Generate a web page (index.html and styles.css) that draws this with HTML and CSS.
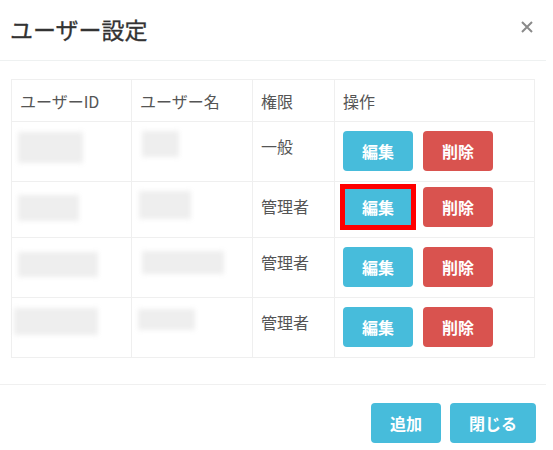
FILE: index.html
```html
<!DOCTYPE html>
<html lang="ja">
<head>
<meta charset="utf-8">
<title>ユーザー設定</title>
<link rel="stylesheet" href="styles.css">
</head>
<body>
<div class="modal">
  <div class="modal-header">
    <h4 class="modal-title">ユーザー設定</h4>
    <button class="close" type="button" aria-label="閉じる">
      <svg width="12" height="12" viewBox="0 0 12 12"><path d="M1 1L11 11M11 1L1 11" stroke="#8a8a8a" stroke-width="2" fill="none"/></svg>
    </button>
  </div>
  <div class="modal-body">
    <table class="users">
      <colgroup>
        <col class="c1"><col class="c2"><col class="c3"><col class="c4">
      </colgroup>
      <thead>
        <tr><th>ユーザーID</th><th>ユーザー名</th><th>権限</th><th>操作</th></tr>
      </thead>
      <tbody>
        <tr>
          <td><span class="redact r1a"></span></td>
          <td><span class="redact r1b"></span></td>
          <td>一般</td>
          <td class="ops"><div class="ops-inner"><button class="btn btn-info">編集</button><button class="btn btn-danger">削除</button></div></td>
        </tr>
        <tr class="row2">
          <td><span class="redact r2a"></span></td>
          <td><span class="redact r2b"></span></td>
          <td>管理者</td>
          <td class="ops"><div class="ops-inner"><button class="btn btn-info marked">編集</button><button class="btn btn-danger">削除</button></div></td>
        </tr>
        <tr>
          <td><span class="redact r3a"></span></td>
          <td><span class="redact r3b"></span></td>
          <td>管理者</td>
          <td class="ops"><div class="ops-inner"><button class="btn btn-info">編集</button><button class="btn btn-danger">削除</button></div></td>
        </tr>
        <tr>
          <td><span class="redact r4a"></span></td>
          <td><span class="redact r4b"></span></td>
          <td>管理者</td>
          <td class="ops"><div class="ops-inner"><button class="btn btn-info">編集</button><button class="btn btn-danger">削除</button></div></td>
        </tr>
      </tbody>
    </table>
  </div>
  <div class="modal-footer">
    <button class="btn btn-info">追加</button>
    <button class="btn btn-info">閉じる</button>
  </div>
</div>
</body>
</html>
```
FILE: styles.css
```css
html, body {
  margin: 0;
  padding: 0;
  background: #ffffff;
}
body {
  font-family: "Noto Sans CJK JP", "Noto Sans", sans-serif;
  color: #555555;
}
.modal {
  width: 546px;
}
.modal-header {
  height: 61px;
  border-bottom: 1px solid #eef1f1;
  display: flex;
  align-items: center;
  justify-content: space-between;
  padding: 0 13px 0 10px;
  box-sizing: border-box;
}
.modal-title {
  margin: 0;
  font-size: 23px;
  font-weight: 400;
  line-height: 1;
  color: #333333;
  position: relative;
  top: -1px;
  -webkit-text-stroke: 0.3px #333333;
}
.close {
  border: 0;
  background: none;
  padding: 0;
  width: 12px;
  height: 12px;
  display: flex;
  position: relative;
  top: -3px;
  cursor: pointer;
}
.modal-body {
  padding: 18px 11px 26px 11px;
  border-bottom: 1px solid #f0f0f0;
}
.users {
  width: 100%;
  border-collapse: collapse;
  font-size: 16px;
}
.c1 { width: 120px; }
.c2 { width: 121px; }
.c3 { width: 82px; }
.users th, .users td {
  border: 1px solid #efefef;
  text-align: left;
  vertical-align: top;
}
.users th {
  font-weight: 400;
  padding: 9px 8px 8px 8px;
  line-height: 24px;
}
.users td {
  padding: 12px 8px 0 8px;
  line-height: 24px;
  height: 46px;
}
.users td.ops {
  padding: 9px 8px 10px 8px;
  height: auto;
}
.ops-inner {
  display: flex;
  gap: 10px;
}
.row2 td { height: 43px; }
.row2 td.ops { padding-top: 5px; padding-bottom: 10px; }
.btn {
  border: 0;
  border-radius: 4px;
  height: 40px;
  padding: 0 19px;
  font-family: "Noto Sans CJK JP", "Noto Sans", sans-serif;
  font-size: 16px;
  font-weight: 700;
  color: #ffffff;
  line-height: 40px;
}
.btn-info {
  background: #47bcdb;
}
.btn-danger {
  background: #d9534f;
}
.marked {
  position: relative;
}
.marked::after {
  content: "";
  position: absolute;
  left: -3px;
  top: -3px;
  right: -3px;
  bottom: -3px;
  border: 5px solid #ff0000;
}
.redact {
  display: block;
  background: #eeeeee;
  filter: blur(2.5px);
}
.r1a { width: 65px; height: 31px; margin: -2px 0 0 -2px; }
.r1b { width: 37px; height: 26px; margin: -3px 0 0 2px; }
.r2a { width: 61px; height: 26px; margin: 1px 0 0 -2px; }
.r2b { width: 52px; height: 28px; margin: -3px 0 0 -1px; }
.r3a { width: 80px; height: 25px; margin: 2px 0 0 -2px; }
.r3b { width: 82px; height: 23px; margin: 1px 0 0 2px; }
.r4a { width: 84px; height: 27px; margin: -2px 0 0 -6px; }
.r4b { width: 57px; height: 21px; margin: -1px 0 0 -2px; }
.modal-footer {
  display: flex;
  justify-content: flex-end;
  gap: 9px;
  padding: 18px 10px 0 0;
}
```
